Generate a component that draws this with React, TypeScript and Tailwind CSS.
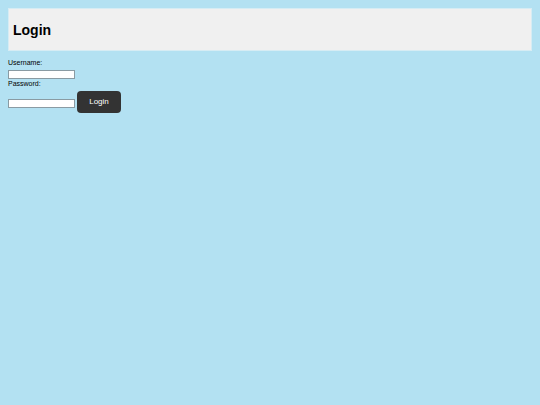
export default function App() {
  return (
    <div className="min-h-[405px] bg-[#b3e1f2] p-2 font-['Liberation_Sans',Arial,sans-serif] text-black">
      <div className="flex h-[43px] items-center border border-[#d6ecf4] bg-[#f0f0f0] px-1">
        <h2 className="text-[14px] font-bold leading-none">Login</h2>
      </div>
      <form className="mt-[7px]" onSubmit={(e) => e.preventDefault()}>
        <label className="block text-[7px] leading-[9px]">Username:</label>
        <input
          type="text"
          className="mt-[3px] block h-[9px] w-[67px] border border-[#8a9ba3] bg-white"
        />
        <label className="block text-[7px] leading-[9px]">Password:</label>
        <div className="mt-[3px] flex items-center gap-[2px]">
          <input
            type="password"
            className="mt-[2px] h-[9px] w-[67px] border border-[#8a9ba3] bg-white"
          />
          <button
            type="submit"
            className="h-[22px] w-[44px] rounded-[4px] bg-[#333] text-[8px] font-normal text-white"
          >
            Login
          </button>
        </div>
      </form>
    </div>
  );
}
